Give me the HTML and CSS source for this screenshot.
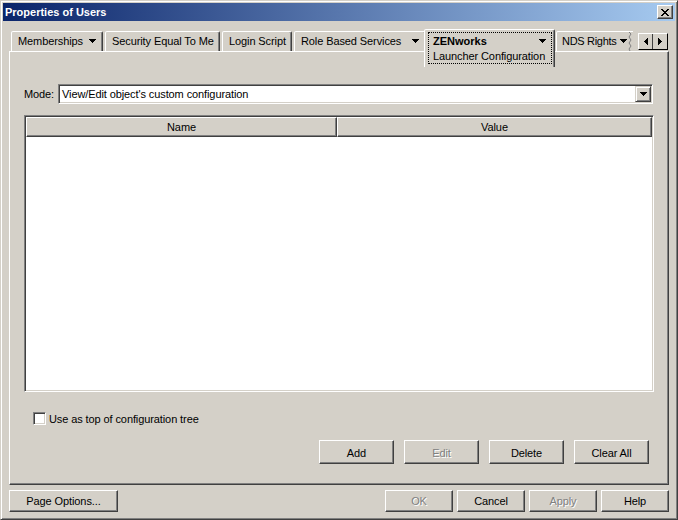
FILE: index.html
```html
<!DOCTYPE html>
<html>
<head>
  <title>Properties of Users</title>
  <link rel="stylesheet" href="styles.css">
</head>
<body>
  <div class="window">
    <div class="titlebar">
      <span class="title">Properties of Users</span>
      <button class="close-btn">
        <svg width="8" height="7" viewBox="0 0 8 7"><path d="M0 0h2v1h-2z M6 0h2v1h-2z M1 1h2v1h-2z M5 1h2v1h-2z M2 2h4v1h-4z M3 3h2v1h-2z M2 4h4v1h-4z M1 5h2v1h-2z M5 5h2v1h-2z M0 6h2v1h-2z M6 6h2v1h-2z" fill="#000"/></svg>
      </button>
    </div>

    <div class="tabstrip">
      <div class="tab tab-members">
        <span>Memberships</span>
        <svg class="tri" width="7" height="4" viewBox="0 0 7 4"><path d="M0 0h7v1h-1v1h-1v1h-1v1h-1v-1h-1v-1h-1v-1h-1z"/></svg>
      </div>
      <div class="tab tab-security"><span>Security Equal To Me</span></div>
      <div class="tab tab-login"><span>Login Script</span></div>
      <div class="tab tab-role">
        <span>Role Based Services</span>
        <svg class="tri" width="7" height="4" viewBox="0 0 7 4"><path d="M0 0h7v1h-1v1h-1v1h-1v1h-1v-1h-1v-1h-1v-1h-1z"/></svg>
      </div>
      <div class="tab tab-active">
        <div class="focus">
          <div class="zen-row">
            <b>ZENworks</b>
            <svg class="tri" width="7" height="4" viewBox="0 0 7 4"><path d="M0 0h7v1h-1v1h-1v1h-1v1h-1v-1h-1v-1h-1v-1h-1z"/></svg>
          </div>
          <div class="zen-sub">Launcher Configuration</div>
        </div>
      </div>
      <div class="tab tab-nds">
        <span class="nds-text">NDS Rights</span>
        <svg class="tri" width="7" height="4" viewBox="0 0 7 4"><path d="M0 0h7v1h-1v1h-1v1h-1v1h-1v-1h-1v-1h-1v-1h-1z"/></svg>
        <svg class="zigzag" width="5" height="19" viewBox="0 0 5 19"><polyline points="1,0 3,2 1,5 3,8 1,11 3,14 1,17 2,19" fill="none" stroke="#808080" stroke-width="1"/></svg>
      </div>
      <div class="scroll-pair">
        <button class="scroll-btn">
          <svg width="4" height="7" viewBox="0 0 4 7"><path d="M3 0h1v7h-1v-1h-1v-1h-1v-1h-1v-1h1v-1h1v-1h1z"/></svg>
        </button>
        <button class="scroll-btn">
          <svg width="4" height="7" viewBox="0 0 4 7"><path d="M0 0h1v1h1v1h1v1h1v1h-1v1h-1v1h-1v1h-1z"/></svg>
        </button>
      </div>
    </div>

    <div class="panel">
      <div class="mode-row">
        <label class="mode-label">Mode:</label>
        <div class="combo">
          <span class="combo-text">View/Edit object's custom configuration</span>
          <span class="combo-btn">
            <svg width="7" height="4" viewBox="0 0 7 4"><path d="M0 0h7v1h-1v1h-1v1h-1v1h-1v-1h-1v-1h-1v-1h-1z"/></svg>
          </span>
        </div>
      </div>

      <div class="grid">
        <div class="grid-head">
          <div class="head-cell col-name">Name</div>
          <div class="head-cell col-value">Value</div>
        </div>
        <div class="grid-body"></div>
      </div>

      <div class="check-row">
        <span class="checkbox"></span>
        <span class="check-label">Use as top of configuration tree</span>
      </div>

      <div class="panel-buttons">
        <button class="btn">Add</button>
        <button class="btn disabled">Edit</button>
        <button class="btn">Delete</button>
        <button class="btn">Clear All</button>
      </div>
    </div>

    <div class="footer">
      <button class="btn btn-page">Page Options...</button>
      <div class="footer-right">
        <button class="btn btn-small disabled">OK</button>
        <button class="btn btn-small">Cancel</button>
        <button class="btn btn-small disabled">Apply</button>
        <button class="btn btn-small">Help</button>
      </div>
    </div>
  </div>
</body>
</html>
```

FILE: styles.css
```css
/* Win2000 style property dialog */
body {
  margin: 0;
  font-family: "Liberation Sans", Arial, sans-serif;
  font-size: 11px;
  letter-spacing: -0.1px;
  color: #000;
}

button {
  font: inherit;
  letter-spacing: inherit;
  color: #000;
  padding: 0;
  margin: 0;
}

.window {
  width: 678px;
  height: 520px;
  box-sizing: border-box;
  background: #d4d0c8;
  border: 1px solid;
  border-color: #d4d0c8 #404040 #404040 #d4d0c8;
  box-shadow: inset 1px 1px #fff, inset -1px -1px #808080;
  padding: 2px;
}

/* title bar */
.titlebar {
  height: 18px;
  display: flex;
  align-items: center;
  padding: 0 2px;
  background: linear-gradient(to right, #0a246a, #a6caf0);
  color: #fff;
  font-weight: bold;
  letter-spacing: 0;
}

.title {
  flex: 1;
}

.close-btn {
  width: 16px;
  height: 14px;
  box-sizing: border-box;
  background: #d4d0c8;
  border: 1px solid;
  border-color: #fff #404040 #404040 #fff;
  box-shadow: inset -1px -1px #808080;
  display: flex;
  align-items: center;
  justify-content: center;
}

/* tabs */
.tabstrip {
  display: flex;
  align-items: flex-end;
  height: 22px;
  margin: 8px 0 0 8px;
}

.tab {
  box-sizing: border-box;
  height: 20px;
  display: flex;
  align-items: center;
  padding: 0 0 1px 6px;
  border: 1px solid;
  border-bottom: none;
  border-color: #fff #404040 transparent #fff;
  box-shadow: inset -1px 0 #808080;
  border-radius: 2px 2px 0 0;
  background: #d4d0c8;
  margin-left: 2px;
  white-space: nowrap;
}

.tab .tri {
  flex: none;
  margin-left: auto;
  margin-right: 6px;
}

.tab-members {
  width: 92px;
  margin-left: 0;
}

.tab-security {
  width: 115px;
}

.tab-login {
  width: 70px;
}

.tab-role {
  width: 132px;
}

.tab-active {
  align-self: flex-start;
  width: 131px;
  height: 38px;
  margin-left: -2px;
  padding: 2px 2px 3px 3px;
  position: relative;
  z-index: 1;
  flex-direction: column;
  align-items: stretch;
}

.focus {
  flex: 1;
  border: 1px dotted #000;
  padding: 0 5px 0 4px;
}

.zen-row {
  height: 16px;
  display: flex;
  align-items: center;
}

.zen-row b {
  letter-spacing: 0;
}

.zen-row .tri {
  margin-left: auto;
  margin-right: 0;
}

.zen-sub {
  height: 14px;
  line-height: 14px;
}

.tab-nds {
  width: 77px;
  margin-left: 1px;
  padding-left: 5px;
  border-right: none;
  box-shadow: none;
  border-top-right-radius: 0;
  overflow: hidden;
}

.nds-text {
  letter-spacing: -0.3px;
}

.tab-nds .tri {
  margin-left: 4px;
  margin-right: 1px;
}

.zigzag {
  flex: none;
}

.scroll-pair {
  display: flex;
  margin-left: 5px;
  margin-bottom: 1px;
  border: 1px solid #000;
  border-top-color: #fff;
  border-left-color: #fff;
}

.scroll-btn {
  width: 14px;
  height: 15px;
  box-sizing: border-box;
  background: #d4d0c8;
  border: none;
  border-right: 1px solid #404040;
  display: flex;
  align-items: center;
  justify-content: center;
}

.scroll-btn:last-child {
  border-right: none;
}

/* panel */
.panel {
  box-sizing: border-box;
  width: 660px;
  height: 434px;
  margin-left: 6px;
  padding: 32px 14px 0 14px;
  border: 1px solid;
  border-color: #fff #404040 #404040 #fff;
  box-shadow: inset -1px -1px #808080;
}

.mode-row {
  display: flex;
  align-items: center;
  height: 20px;
}

.mode-label {
  width: 34px;
}

.combo {
  flex: 1;
  height: 20px;
  box-sizing: border-box;
  margin-right: 1px;
  background: #fff;
  border: 1px solid;
  border-color: #808080 #fff #fff #808080;
  box-shadow: inset 1px 1px #404040, inset -1px -1px #d4d0c8;
  padding: 1px;
  display: flex;
  align-items: center;
}

.combo-text {
  flex: 1;
  padding-left: 2px;
}

.combo-btn {
  width: 16px;
  height: 16px;
  box-sizing: border-box;
  background: #d4d0c8;
  border: 1px solid;
  border-color: #d4d0c8 #404040 #404040 #d4d0c8;
  box-shadow: inset 1px 1px #fff, inset -1px -1px #808080;
  display: flex;
  align-items: center;
  justify-content: center;
}

.grid {
  margin-top: 11px;
  height: 277px;
  box-sizing: border-box;
  border: 1px solid;
  border-color: #808080 #fff #fff #808080;
  box-shadow: inset 1px 1px #404040, inset -1px -1px #d4d0c8;
  padding: 1px;
  display: flex;
  flex-direction: column;
}

.grid-head {
  display: flex;
  height: 20px;
}

.head-cell {
  box-sizing: border-box;
  height: 20px;
  line-height: 18px;
  text-align: center;
  border: 1px solid;
  border-color: #fff #404040 #404040 #fff;
  box-shadow: inset -1px -1px #808080;
}

.col-name {
  width: 311px;
}

.col-value {
  flex: 1;
}

.grid-body {
  flex: 1;
  background: #fff;
}

.check-row {
  display: flex;
  align-items: center;
  height: 13px;
  margin-top: 20px;
  padding-left: 9px;
}

.checkbox {
  width: 13px;
  height: 13px;
  box-sizing: border-box;
  background: #fff;
  border: 1px solid;
  border-color: #808080 #fff #fff #808080;
  box-shadow: inset 1px 1px #404040, inset -1px -1px #d4d0c8;
}

.check-label {
  margin-left: 3px;
}

.panel-buttons {
  display: flex;
  justify-content: flex-end;
  gap: 10px;
  margin-top: 15px;
  margin-right: 5px;
}

.btn {
  width: 75px;
  height: 24px;
  box-sizing: border-box;
  padding-top: 1px;
  background: #d4d0c8;
  border: 1px solid;
  border-color: #fff #404040 #404040 #fff;
  box-shadow: inset -1px -1px #808080;
}

.btn.disabled {
  color: #808080;
  text-shadow: 1px 1px #fff;
}

/* bottom buttons */
.footer {
  display: flex;
  align-items: center;
  margin-top: 5px;
  padding: 0 6px;
}

.btn-page {
  width: 109px;
  height: 22px;
  padding-top: 0;
}

.footer-right {
  margin-left: auto;
  display: flex;
  gap: 4px;
}

.btn-small {
  width: 68px;
  height: 22px;
  padding-top: 0;
}
```
